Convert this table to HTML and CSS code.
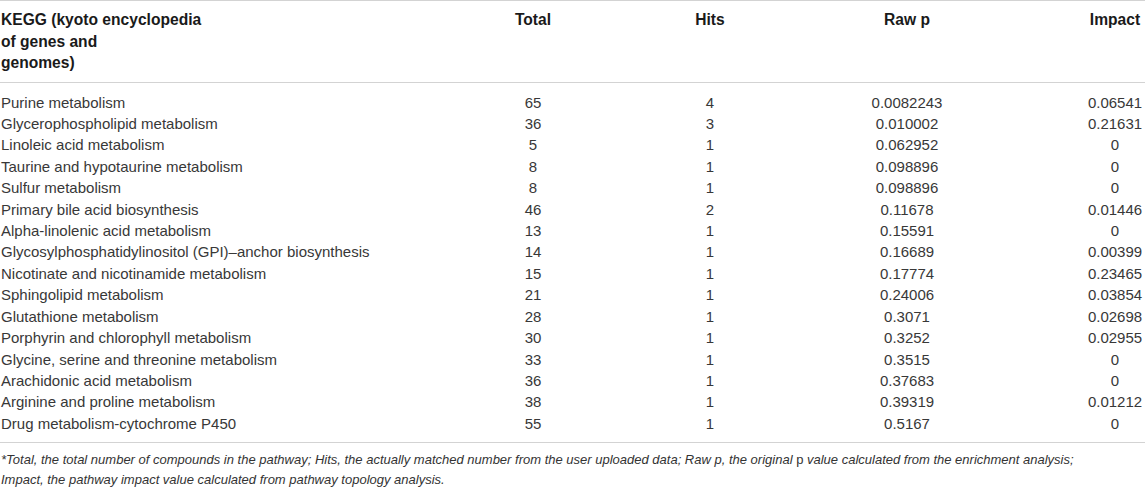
FILE: index.html
```html
<!DOCTYPE html>
<html>
<head>
<meta charset="utf-8">
<link rel="stylesheet" href="styles.css">
</head>
<body>
<div class="table-wrap">
  <table class="kegg">
    <colgroup>
      <col class="c1"><col class="c2"><col class="c3"><col class="c4"><col class="c5">
    </colgroup>
    <thead>
      <tr>
        <th class="name">KEGG (kyoto encyclopedia<br>of genes and<br>genomes)</th>
        <th>Total</th>
        <th>Hits</th>
        <th>Raw p</th>
        <th>Impact</th>
      </tr>
    </thead>
    <tbody>
      <tr><td class="name">Purine metabolism</td><td>65</td><td>4</td><td>0.0082243</td><td>0.06541</td></tr>
      <tr><td class="name">Glycerophospholipid metabolism</td><td>36</td><td>3</td><td>0.010002</td><td>0.21631</td></tr>
      <tr><td class="name">Linoleic acid metabolism</td><td>5</td><td>1</td><td>0.062952</td><td>0</td></tr>
      <tr><td class="name">Taurine and hypotaurine metabolism</td><td>8</td><td>1</td><td>0.098896</td><td>0</td></tr>
      <tr><td class="name">Sulfur metabolism</td><td>8</td><td>1</td><td>0.098896</td><td>0</td></tr>
      <tr><td class="name">Primary bile acid biosynthesis</td><td>46</td><td>2</td><td>0.11678</td><td>0.01446</td></tr>
      <tr><td class="name">Alpha-linolenic acid metabolism</td><td>13</td><td>1</td><td>0.15591</td><td>0</td></tr>
      <tr><td class="name">Glycosylphosphatidylinositol (GPI)–anchor biosynthesis</td><td>14</td><td>1</td><td>0.16689</td><td>0.00399</td></tr>
      <tr><td class="name">Nicotinate and nicotinamide metabolism</td><td>15</td><td>1</td><td>0.17774</td><td>0.23465</td></tr>
      <tr><td class="name">Sphingolipid metabolism</td><td>21</td><td>1</td><td>0.24006</td><td>0.03854</td></tr>
      <tr><td class="name">Glutathione metabolism</td><td>28</td><td>1</td><td>0.3071</td><td>0.02698</td></tr>
      <tr><td class="name">Porphyrin and chlorophyll metabolism</td><td>30</td><td>1</td><td>0.3252</td><td>0.02955</td></tr>
      <tr><td class="name">Glycine, serine and threonine metabolism</td><td>33</td><td>1</td><td>0.3515</td><td>0</td></tr>
      <tr><td class="name">Arachidonic acid metabolism</td><td>36</td><td>1</td><td>0.37683</td><td>0</td></tr>
      <tr><td class="name">Arginine and proline metabolism</td><td>38</td><td>1</td><td>0.39319</td><td>0.01212</td></tr>
      <tr><td class="name">Drug metabolism-cytochrome P450</td><td>55</td><td>1</td><td>0.5167</td><td>0</td></tr>
    </tbody>
  </table>
  <p class="footnote">*Total, the total number of compounds in the pathway; Hits, the actually matched number from the user uploaded data; Raw p, the original <span class="upright">p</span> value calculated from the enrichment analysis;<br>Impact, the pathway impact value calculated from pathway topology analysis.</p>
</div>
</body>
</html>
```

FILE: styles.css
```css
html, body {
  margin: 0;
  padding: 0;
  background: #ffffff;
}

.table-wrap {
  width: 1145px;
  font-family: "Liberation Sans", Arial, Helvetica, sans-serif;
  color: #383838;
}

.kegg {
  width: 1145px;
  border-collapse: collapse;
  table-layout: fixed;
  border-top: 1px solid #d3d3d3;
  border-bottom: 1px solid #d3d3d3;
  font-size: 15px;
  line-height: 1.42857;
}

.kegg col.c1 { width: 375px; }
.kegg col.c2 { width: 316px; }
.kegg col.c3 { width: 38px; }
.kegg col.c4 { width: 356px; }
.kegg col.c5 { width: 60px; }

.kegg th {
  font-weight: bold;
  font-size: 15.6px;
  line-height: 21.5px;
  color: #1a1a1a;
  text-align: center;
  vertical-align: top;
  padding: 8px 0 8px 0;
  border-bottom: 1px solid #d3d3d3;
  white-space: nowrap;
}

.kegg td {
  text-align: center;
  padding: 0;
  white-space: nowrap;
}

.kegg .name {
  text-align: left;
  padding-left: 1px;
}

.kegg tbody tr:first-child td {
  padding-top: 9px;
}

.kegg tbody tr:last-child td {
  padding-bottom: 8px;
}

.footnote {
  margin: 7px 0 0 1px;
  font-size: 13px;
  line-height: 20px;
  font-style: italic;
  color: #333333;
}

.footnote .upright {
  font-style: normal;
}
```
